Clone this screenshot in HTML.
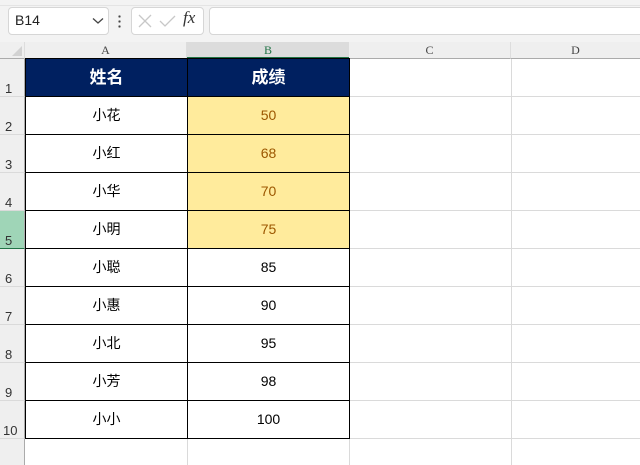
<!DOCTYPE html>
<html><head><meta charset="utf-8"><style>
*{margin:0;padding:0;box-sizing:border-box}
body{width:640px;height:465px;overflow:hidden;background:#fff;position:relative;font-family:"Liberation Sans","Noto Sans CJK SC",sans-serif}
.a{position:absolute}
.top{left:0;top:0;width:640px;height:42px;background:#f3f3f3}
.box{background:#fff;border:1px solid #d6d6d6;border-radius:4px}
.ch{top:42px;height:17px;background:#efefef;border-bottom:1px solid #ababab;font-family:"Liberation Serif",serif;font-size:12px;color:#444;text-align:center;line-height:17px}
.rh{left:0;width:25px;background:#efefef;border-right:1px solid #ababab;font-size:13px;color:#333;padding-left:4px;border-bottom:1px solid #dadada}
.rh span{position:absolute;bottom:0;left:5px;line-height:14px}
.c{height:38px;line-height:37px;text-align:center;font-size:14px;color:#000}
</style></head><body>
<div class="a top"></div>
<div class="a" style="left:0;top:5px;width:640px;height:1px;background:#e4e4e4"></div>
<div class="a box" style="left:8px;top:7px;width:101px;height:28px"></div>
<div class="a" style="left:15px;top:12px;font-size:14px;color:#222">B14</div>
<svg class="a" style="left:92px;top:17px" width="12" height="8"><path d="M1 1.5L6 6L11 1.5" stroke="#444" stroke-width="1.3" fill="none"/></svg>
<div class="a" style="left:118px;top:14px;width:3px;height:14px;background:radial-gradient(circle,#444 1px,transparent 1.3px) 0 0/3px 5px"></div>
<div class="a box" style="left:131px;top:7px;width:73px;height:28px"></div>
<svg class="a" style="left:136px;top:13px" width="20" height="16"><path d="M3 2L15 14M15 2L3 14" stroke="#c8c8c8" stroke-width="1.3"/></svg>
<svg class="a" style="left:158px;top:13px" width="20" height="16"><path d="M2 8L7 13L17 3" stroke="#c8c8c8" stroke-width="1.3" fill="none"/></svg>
<div class="a" style="left:183px;top:8px;font-family:'Liberation Serif',serif;font-style:italic;font-size:17px;color:#333">fx</div>
<div class="a box" style="left:209px;top:7px;width:440px;height:28px"></div>

<div class="a ch" style="left:0;width:25px;border-right:1px solid #ddd"></div>
<svg class="a" style="left:12px;top:46px" width="10" height="10"><path d="M10 0L10 10L0 10Z" fill="#d2d2d2"/></svg>
<div class="a ch" style="left:25px;width:162px;border-right:1px solid #ddd">A</div>
<div class="a ch" style="left:187px;width:162px;background:#dcdcdc;border-bottom:2px solid #217346;color:#217346">B</div>
<div class="a ch" style="left:349px;width:162px;border-right:1px solid #ddd">C</div>
<div class="a ch" style="left:511px;width:129px">D</div>

<div class="a" style="left:0;top:59px;width:25px;height:406px;background:#efefef;border-right:1px solid #ababab"></div>
<div class="a" style="left:511px;top:59px;width:1px;height:406px;background:#dadada"></div>
<div class="a" style="left:349px;top:438px;width:1px;height:27px;background:#dadada"></div>
<div class="a" style="left:187px;top:438px;width:1px;height:27px;background:#dadada"></div>

<div class="a" style="left:349px;top:96px;width:291px;height:1px;background:#dadada"></div>
<div class="a" style="left:349px;top:134px;width:291px;height:1px;background:#dadada"></div>
<div class="a" style="left:349px;top:172px;width:291px;height:1px;background:#dadada"></div>
<div class="a" style="left:349px;top:210px;width:291px;height:1px;background:#dadada"></div>
<div class="a" style="left:349px;top:248px;width:291px;height:1px;background:#dadada"></div>
<div class="a" style="left:349px;top:286px;width:291px;height:1px;background:#dadada"></div>
<div class="a" style="left:349px;top:324px;width:291px;height:1px;background:#dadada"></div>
<div class="a" style="left:349px;top:362px;width:291px;height:1px;background:#dadada"></div>
<div class="a" style="left:349px;top:400px;width:291px;height:1px;background:#dadada"></div>
<div class="a" style="left:349px;top:438px;width:291px;height:1px;background:#dadada"></div>

<div class="a rh" style="top:59px;height:38px"><span>1</span></div>
<div class="a rh" style="top:97px;height:38px"><span>2</span></div>
<div class="a rh" style="top:135px;height:38px"><span>3</span></div>
<div class="a rh" style="top:173px;height:38px"><span>4</span></div>
<div class="a rh" style="top:211px;height:38px;background:#9fd5b7;border-bottom:1px solid #217346"><span>5</span></div>
<div class="a rh" style="top:249px;height:38px"><span>6</span></div>
<div class="a rh" style="top:287px;height:38px"><span>7</span></div>
<div class="a rh" style="top:325px;height:38px"><span>8</span></div>
<div class="a rh" style="top:363px;height:38px"><span>9</span></div>
<div class="a rh" style="top:401px;height:38px"><span style="left:3px">10</span></div>

<table class="a" style="left:25px;top:58px;border-collapse:collapse;table-layout:fixed;width:324px">
<colgroup><col style="width:162px"><col style="width:162px"></colgroup>
<tr style="background:#002060;font-weight:bold"><td class="c" style="border:1px solid #000;color:#fff;font-size:17px">姓名</td><td class="c" style="border:1px solid #000;color:#fff;font-size:17px">成绩</td></tr>
<tr><td class="c" style="border:1px solid #000">小花</td><td class="c" style="border:1px solid #000;background:#ffeb9c;color:#9c5700">50</td></tr>
<tr><td class="c" style="border:1px solid #000">小红</td><td class="c" style="border:1px solid #000;background:#ffeb9c;color:#9c5700">68</td></tr>
<tr><td class="c" style="border:1px solid #000">小华</td><td class="c" style="border:1px solid #000;background:#ffeb9c;color:#9c5700">70</td></tr>
<tr><td class="c" style="border:1px solid #000">小明</td><td class="c" style="border:1px solid #000;background:#ffeb9c;color:#9c5700">75</td></tr>
<tr><td class="c" style="border:1px solid #000">小聪</td><td class="c" style="border:1px solid #000">85</td></tr>
<tr><td class="c" style="border:1px solid #000">小惠</td><td class="c" style="border:1px solid #000">90</td></tr>
<tr><td class="c" style="border:1px solid #000">小北</td><td class="c" style="border:1px solid #000">95</td></tr>
<tr><td class="c" style="border:1px solid #000">小芳</td><td class="c" style="border:1px solid #000">98</td></tr>
<tr><td class="c" style="border:1px solid #000">小小</td><td class="c" style="border:1px solid #000">100</td></tr>
</table>
</body></html>
